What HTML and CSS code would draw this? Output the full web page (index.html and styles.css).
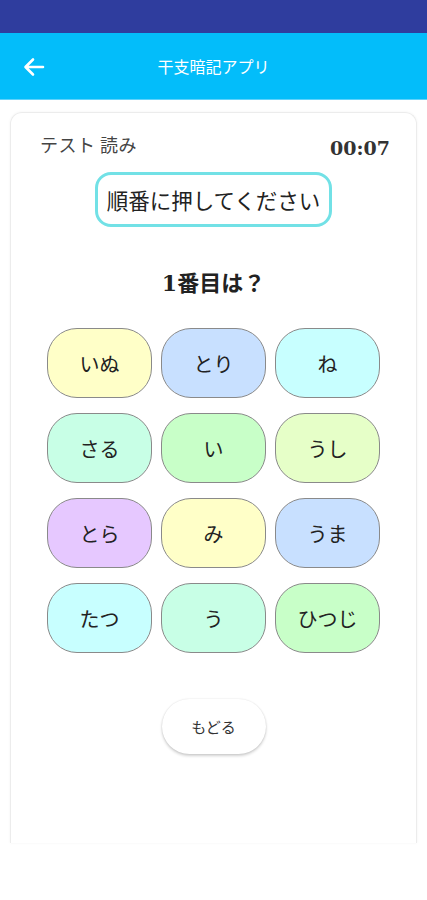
FILE: index.html
```html
<!DOCTYPE html>
<html lang="ja">
<head>
<meta charset="utf-8">
<link rel="stylesheet" href="styles.css">
</head>
<body>
<div class="status"></div>
<header class="appbar">
  <svg class="back" width="22" height="20" viewBox="0 0 22 20"><path d="M20 10H3M10 2.5L2.5 10L10 17.5" fill="none" stroke="#fff" stroke-width="2.6" stroke-linecap="round" stroke-linejoin="round"/></svg>
  <div class="title">干支暗記アプリ</div>
</header>
<main class="card">
  <div class="head">
    <div class="mode">テスト 読み</div>
    <div class="timer">00:07</div>
  </div>
  <div class="prompt">順番に押してください</div>
  <div class="question"><span class="num">1</span>番目は？</div>
  <div class="grid">
    <button class="kana c-yellow">いぬ</button>
    <button class="kana c-blue">とり</button>
    <button class="kana c-cyan">ね</button>
    <button class="kana c-mint">さる</button>
    <button class="kana c-green">い</button>
    <button class="kana c-lime">うし</button>
    <button class="kana c-lav">とら</button>
    <button class="kana c-yellow">み</button>
    <button class="kana c-blue">うま</button>
    <button class="kana c-cyan">たつ</button>
    <button class="kana c-mint">う</button>
    <button class="kana c-green">ひつじ</button>
  </div>
  <button class="backbtn">もどる</button>
</main>
</body>
</html>
```

FILE: styles.css
```css
* { box-sizing: border-box; }
html, body { margin: 0; padding: 0; background: #fff; }
body { font-family: "Noto Sans CJK JP", "Noto Sans", sans-serif; color: #222; width: 427px; height: 900px; overflow: hidden; }
.status { height: 33px; background: #2f3d9e; }
.appbar { height: 67px; background: #03bdfa; display: flex; align-items: center; position: relative; border-bottom: 1px solid #5fd2fb; }
.back { margin-left: 23px; margin-top: 1px; }
.title { position: absolute; left: 0; right: 0; text-align: center; color: #fff; font-size: 16px; line-height: 20px; }
.card { margin: 12px 10px 0; height: 731px; border: 1px solid #ececec; border-bottom: none; border-radius: 12px 12px 0 0; box-shadow: 0 0 3px rgba(0,0,0,0.05); padding: 21px 29px 0 29px; display: flex; flex-direction: column; align-items: center; }
.head { width: 100%; display: flex; justify-content: space-between; align-items: flex-start; height: 26px; }
.mode { font-size: 18px; line-height: 20px; letter-spacing: 0.5px; color: #444; }
.timer { font-family: "DejaVu Serif", serif; font-weight: bold; font-size: 19px; line-height: 24px; margin-top: 2px; margin-right: -3px; color: #333; }
.prompt { margin-top: 12px; height: 55px; padding: 0 9px; border: 3px solid #72e1e6; border-radius: 16px; display: flex; align-items: center; font-size: 21.5px; color: #222; }
.question { margin-top: 39px; font-size: 22px; line-height: 30px; font-weight: bold; color: #222; }
.num { font-family: "DejaVu Serif", serif; }
.grid { margin-top: 30px; display: grid; grid-template-columns: repeat(3, 105px); grid-auto-rows: 70px; column-gap: 9px; row-gap: 15px; }
.kana { font-family: "Noto Sans CJK JP", sans-serif; font-size: 20px; color: #222; border: 1px solid #8a8a8a; border-radius: 30px; padding: 0; }
.c-yellow { background: #ffffc8; }
.c-blue { background: #c8e0ff; }
.c-cyan { background: #c8ffff; }
.c-mint { background: #c8ffe6; }
.c-green { background: #c8ffc8; }
.c-lime { background: #e6ffc8; }
.c-lav { background: #e6c8ff; }
.backbtn { margin-top: 46px; width: 104px; height: 55px; border: none; border-radius: 28px; background: #fff; font-family: "Noto Sans CJK JP", sans-serif; font-size: 15px; color: #333; box-shadow: 0 2px 3px rgba(0,0,0,0.18), 0 0 2px rgba(0,0,0,0.12); }
```
